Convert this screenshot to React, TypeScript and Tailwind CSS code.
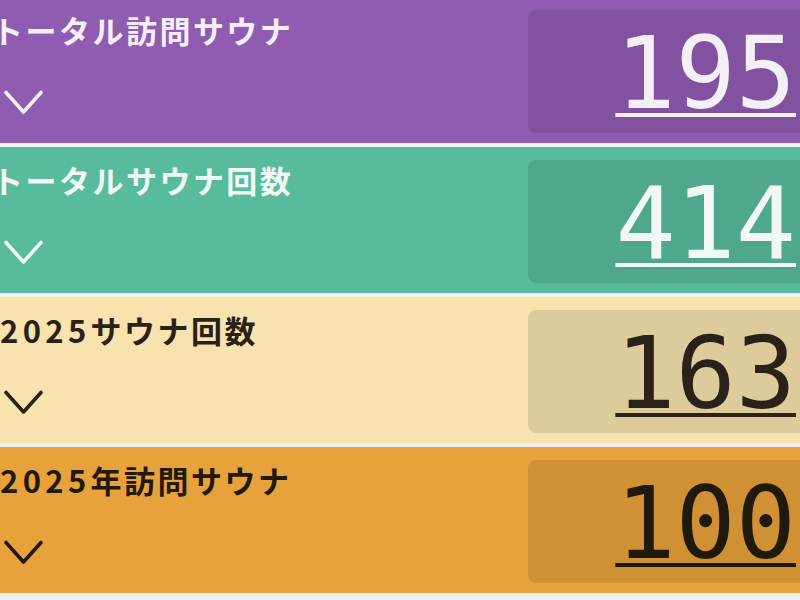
interface Stat {
  lead?: string;
  title: string;
  value: number;
  bg: string;
  text: string;
  shift: string;
}

const stats: Stat[] = [
  { title: 'トータル訪問サウナ', value: 195, bg: 'bg-[#8f5cb1]', text: 'text-[#f4eff6]', shift: '-ml-[8px]' },
  { title: 'トータルサウナ回数', value: 414, bg: 'bg-[#59bb9d]', text: 'text-[#f1f7f4]', shift: '-ml-[8px]' },
  { lead: '2025', title: 'サウナ回数', value: 163, bg: 'bg-[#f8e2ae]', text: 'text-[#2a2219]', shift: 'ml-0' },
  { lead: '2025', title: '年訪問サウナ', value: 100, bg: 'bg-[#e8a23c]', text: 'text-[#22190d]', shift: 'ml-0' }
];

function Chevron() {
  return (
    <svg width="46" height="26" viewBox="0 0 46 26" fill="none" className="mt-[45px]">
      <polyline
        points="6,2.5 23.5,22 41,2.5"
        stroke="currentColor"
        strokeWidth="3.6"
        strokeLinecap="round"
        strokeLinejoin="round"
      />
    </svg>
  );
}

function StatRow({ lead, title, value, bg, text, shift }: Stat) {
  return (
    <div className={`flex h-[146px] shrink-0 ${bg} ${text}`}>
      <div className="flex flex-col">
        <h2
          className={`pt-[17px] text-[31px] font-bold leading-none tracking-[0.08em] ${shift}`}
          style={{ fontFamily: '"Noto Sans CJK JP", "Noto Sans", sans-serif' }}
        >
          {lead && <span className="tracking-[0.14em]">{lead}</span>}
          {title}
        </h2>
        <Chevron />
      </div>
      <div className="ml-auto mb-[10px] mt-[13px] flex w-[292px] items-center justify-end rounded-lg bg-black/10 pr-6 pt-[5px]">
        <span
          className="text-[100px] leading-none underline decoration-[4px] underline-offset-[5px]"
          style={{ fontFamily: '"DejaVu Sans Mono", monospace' }}
        >
          {value}
        </span>
      </div>
    </div>
  );
}

export default function App() {
  return (
    <div className="h-[600px] w-[800px] overflow-hidden bg-[#f1f1f1]">
      <div className="-mt-[3px] flex w-[820px] flex-col gap-1">
        {stats.map((s) => (
          <StatRow key={s.value} {...s} />
        ))}
      </div>
    </div>
  );
}
